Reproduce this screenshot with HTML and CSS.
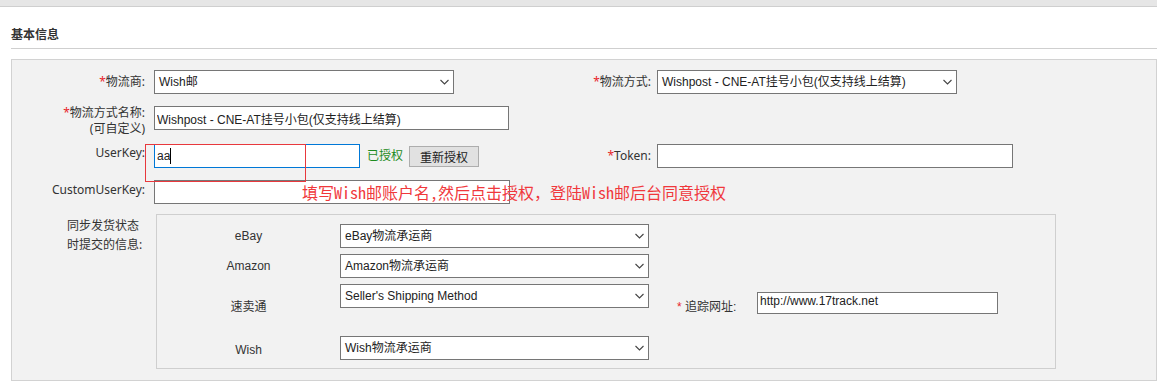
FILE: index.html
```html
<!DOCTYPE html>
<html lang="zh-CN">
<head>
<meta charset="utf-8">
<title>基本信息</title>
<link rel="stylesheet" href="styles.css">
</head>
<body>
<div class="topbar"></div>
<div class="section">
  <div class="section-title">基本信息</div>
  <div class="panel">
    <div class="row row-center">
      <div class="lbl"><span class="req">*</span>物流商:</div>
      <div class="ctrl">
        <div class="select w300"><span>Wish邮</span><svg class="chev" width="9" height="6" viewBox="0 0 9 6"><path d="M0.5 1 L4.5 5 L8.5 1" /></svg></div>
      </div>
      <div class="lbl lbl-r"><span class="req">*</span>物流方式:</div>
      <div class="ctrl">
        <div class="select w300"><span>Wishpost - CNE-AT挂号小包(仅支持线上结算)</span><svg class="chev" width="9" height="6" viewBox="0 0 9 6"><path d="M0.5 1 L4.5 5 L8.5 1" /></svg></div>
      </div>
    </div>

    <div class="row row-top r2">
      <div class="lbl lbl-2l"><span class="req">*</span>物流方式名称:<br>(可自定义)</div>
      <div class="ctrl">
        <input class="txt w355" type="text" value="Wishpost - CNE-AT挂号小包(仅支持线上结算)">
      </div>
    </div>

    <div class="row row-top r3">
      <div class="lbl lbl-top">UserKey:</div>
      <div class="ctrl ctrl-flex">
        <div class="caret-wrap">
          <input class="txt w206 focus" type="text" value="aa">
          <span class="caret"></span>
        </div>
        <span class="authed">已授权</span>
        <button class="btn" type="button">重新授权</button>
      </div>
      <div class="lbl lbl-r lbl-mid"><span class="req">*</span>Token:</div>
      <div class="ctrl">
        <input class="txt w356" type="text" value="">
      </div>
    </div>

    <div class="row row-top r4">
      <div class="lbl lbl-top">CustomUserKey:</div>
      <div class="ctrl">
        <input class="txt w356" type="text" value="">
      </div>
    </div>

    <div class="row row-top r5">
      <div class="lbl lbl-sync"><div class="sync-text">同步发货状态<br>时提交的信息:</div></div>
      <div class="sync-box">
        <div class="sync-grid">
          <div class="s-lbl">eBay</div>
          <div class="select w309"><span>eBay物流承运商</span><svg class="chev" width="9" height="6" viewBox="0 0 9 6"><path d="M0.5 1 L4.5 5 L8.5 1" /></svg></div>
          <div></div>

          <div class="s-lbl">Amazon</div>
          <div class="select w309"><span>Amazon物流承运商</span><svg class="chev" width="9" height="6" viewBox="0 0 9 6"><path d="M0.5 1 L4.5 5 L8.5 1" /></svg></div>
          <div></div>

          <div class="s-lbl s-tall">速卖通</div>
          <div class="s-top"><div class="select w309"><span>Seller's Shipping Method</span><svg class="chev" width="9" height="6" viewBox="0 0 9 6"><path d="M0.5 1 L4.5 5 L8.5 1" /></svg></div></div>
          <div class="track">
            <span class="track-lbl"><span class="req">*</span> 追踪网址:</span>
            <input class="txt track-in" type="text" value="http://www.17track.net">
          </div>

          <div class="s-lbl s-wish">Wish</div>
          <div class="select w309"><span>Wish物流承运商</span><svg class="chev" width="9" height="6" viewBox="0 0 9 6"><path d="M0.5 1 L4.5 5 L8.5 1" /></svg></div>
          <div></div>
        </div>
      </div>
    </div>

    <div class="note-box"></div>
    <div class="note-text">填写Wish邮账户名,然后点击授权，登陆Wish邮后台同意授权</div>
  </div>
</div>
</body>
</html>
```

FILE: styles.css
```css
* { box-sizing: border-box; }

html, body {
  margin: 0;
  padding: 0;
  background: #fff;
}

body {
  font-family: "Liberation Sans", "Noto Sans CJK SC", sans-serif;
  font-size: 12px;
  line-height: 16px;
  color: #333;
}

.topbar {
  height: 7px;
  background: #e6e6e6;
  border-bottom: 1px solid #cfcfcf;
}

.section {
  margin-left: 11px;
}

.section-title {
  padding-top: 20px;
  padding-bottom: 5px;
  font-weight: bold;
  font-size: 12px;
  line-height: 16px;
  color: #333;
  border-bottom: 1px solid #cfcfcf;
}

.panel {
  position: relative;
  margin-top: 10px;
  height: 322px;
  background: #f2f2f2;
  border: 1px solid #d2d2d2;
  padding: 10px 0 10px 0;
}

.row {
  display: grid;
  grid-template-columns: 142px 408px 95px 1fr;
}

.row-center { align-items: center; }
.row-top { align-items: start; }

.r2 { margin-top: 12px; }
.r3 { margin-top: 7px; }
.r4 { margin-top: 12px; }
.r5 { margin-top: 10px; }

.lbl {
  text-align: right;
  padding-right: 9px;
  font-family: "Noto Sans", "Noto Sans CJK SC", sans-serif;
  color: #333;
  white-space: nowrap;
}

.lbl-r { padding-right: 6px; }
.lbl-2l { margin-top: -1px; }
.lbl-top { margin-top: 1px; }
.r4 .lbl-top { margin-top: 2px; }
.lbl-mid { align-self: center; }

.req { color: #e8262b; }

.ctrl-flex {
  display: flex;
  align-items: center;
}

.select {
  display: flex;
  align-items: center;
  justify-content: space-between;
  height: 24px;
  border: 1px solid #767676;
  background: #fff;
  padding: 0 4px 0 4px;
  font-size: 12px;
  color: #222;
  white-space: nowrap;
}

.chev {
  flex: none;
  fill: none;
  stroke: #444;
  stroke-width: 1.1;
}

.w300 { width: 300px; }
.w309 { width: 309px; }

.txt {
  display: block;
  height: 24px;
  border: 1px solid #767676;
  background: #fff;
  padding: 0 2px;
  margin: 0;
  font-family: "Liberation Sans", "Noto Sans CJK SC", sans-serif;
  font-size: 12px;
  color: #222;
  outline: none;
}

.w355 { width: 355px; }
.w356 { width: 356px; }
.w206 { width: 206px; }

.focus { border-color: #0078d7; }

.caret-wrap { position: relative; }

.caret {
  position: absolute;
  left: 16px;
  top: 4px;
  width: 1px;
  height: 16px;
  background: #000;
}

.authed {
  margin-left: 7px;
  font-size: 12px;
  color: #1e8c1e;
}

.btn {
  margin-left: 6px;
  width: 70px;
  height: 21px;
  padding: 0;
  border: 1px solid #adadad;
  background: #e1e1e1;
  font-family: "Liberation Sans", "Noto Sans CJK SC", sans-serif;
  font-size: 12px;
  color: #222;
}

.lbl-sync {
  display: flex;
  justify-content: flex-end;
}

.sync-text {
  width: 78px;
  text-align: left;
  line-height: 19px;
  margin-top: 2px;
}

.sync-box {
  grid-column: 2 / 5;
  margin-left: 2px;
  width: 900px;
  height: 155px;
  border: 1px solid #cfcfcf;
  padding: 9px 0 8px 0;
}

.sync-grid {
  display: grid;
  grid-template-columns: 183px 309px 1fr;
  grid-template-rows: 24px 24px 46px 24px;
  row-gap: 6px;
  align-items: center;
}

.s-lbl {
  text-align: center;
  font-size: 12px;
  color: #333;
}

.s-wish { margin-top: 3px; }

.s-top { align-self: start; }

.track {
  align-self: start;
  display: flex;
  align-items: flex-start;
  padding-left: 28px;
  padding-top: 8px;
}

.track-lbl {
  width: 80px;
  margin-top: 7px;
  white-space: nowrap;
}

.track-in {
  width: 241px;
  height: 22px;
  padding: 0 2px 4px 2px;
  font-size: 12px;
}

.note-box {
  position: absolute;
  left: 133px;
  top: 84px;
  width: 161px;
  height: 38px;
  border: 1px solid #e8383d;
}

.note-text {
  position: absolute;
  left: 290px;
  top: 122px;
  font-family: "Noto Sans Mono CJK SC", "Liberation Mono", "Noto Sans CJK SC", monospace;
  font-size: 16px;
  line-height: 20px;
  color: #f0383c;
  white-space: nowrap;
}
```
